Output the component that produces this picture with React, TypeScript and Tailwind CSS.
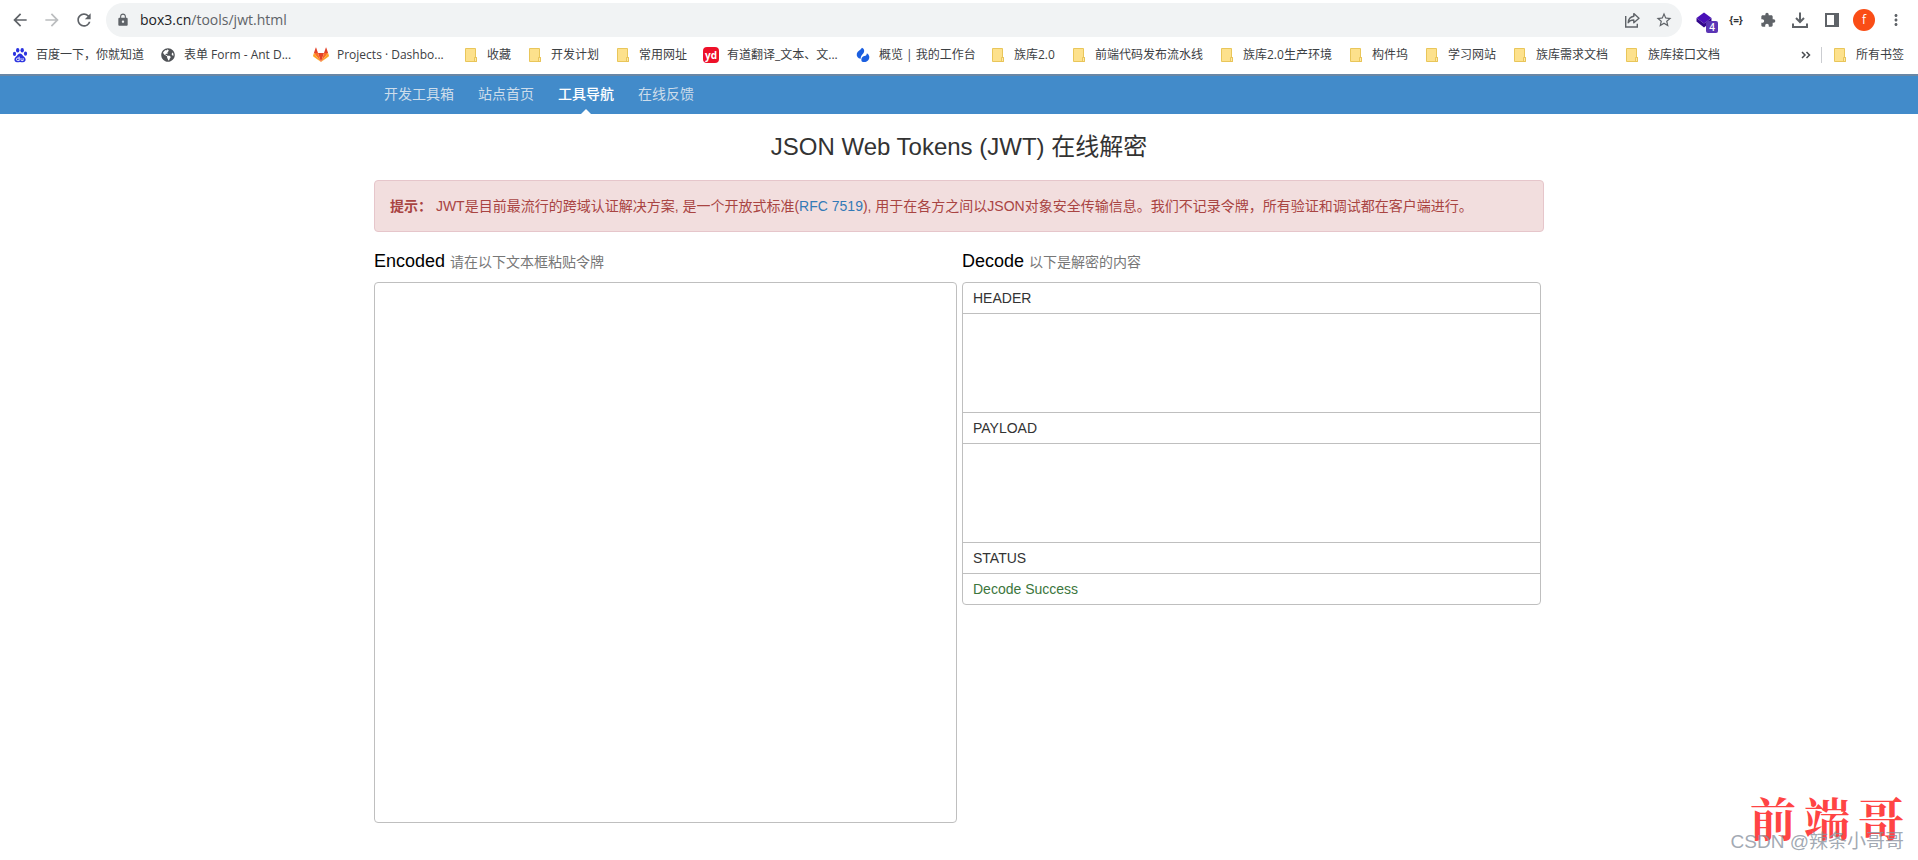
import type { ReactNode } from 'react';
import { FaGlobeAmericas } from 'react-icons/fa';
import {
  MdArrowBack,
  MdArrowForward,
  MdExtension,
  MdLock,
  MdMoreVert,
  MdRefresh,
  MdStarBorder,
} from 'react-icons/md';

function FolderIcon() {
  return (
    <svg viewBox="0 0 16 16" className="size-4 shrink-0" aria-hidden="true">
      <path d="M2.500 1.500h10v9h1v4h-11z" fill="#fde18c" stroke="#e9c65a" />
      <path d="M11.500 10.500h2v4h-2z" fill="#fdeaa6" stroke="#e6be4c" strokeWidth=".8" />
    </svg>
  );
}

function BaiduIcon() {
  return (
    <svg viewBox="0 0 16 16" className="size-4 shrink-0" aria-hidden="true">
      <g fill="#2a32e0">
        <ellipse cx="5.700" cy="3.200" rx="1.700" ry="2.300" />
        <ellipse cx="10.200" cy="3.200" rx="1.700" ry="2.300" />
        <ellipse cx="2.500" cy="6.900" rx="1.600" ry="2.100" />
        <ellipse cx="13.500" cy="6.700" rx="1.600" ry="2.100" />
        <path d="M8 6.600c1.500 0 2.200 1.300 3.200 2.400 1.100 1.100 2.400 1.800 2.400 3.500 0 1.800-1.200 2.700-2.600 2.700-1.100 0-2-.3-3-.3s-1.900.3-3 .3c-1.500 0-2.600-.9-2.600-2.700 0-1.700 1.300-2.400 2.400-3.500 1-1.100 1.700-2.400 3.200-2.400z" />
      </g>
      <path
        d="M7.200 9.600v4h-1.500a1.200 1.200 0 0 1 0-2.500h1.500M9 11.100v1.700q0 .8.800.8h1.300v-2.500"
        fill="none"
        stroke="#fff"
        strokeWidth=".9"
      />
    </svg>
  );
}

function GitlabIcon() {
  return (
    <svg viewBox="0 0 16 16" className="size-4 shrink-0" aria-hidden="true">
      <path d="M8 15 11 6H5z" fill="#e24329" />
      <path d="M8 15 5 6H.9z" fill="#fc6d26" />
      <path d="M8 15 11 6h4.100z" fill="#fc6d26" />
      <path d="M.9 6 .1 8.600c-.1.300 0 .6.200.8L8 15z" fill="#fca326" />
      <path d="m15.100 6 .8 2.600c.1.300 0 .6-.2.8L8 15z" fill="#fca326" />
      <path d="M.9 6H5L3.200.8c-.1-.3-.4-.3-.5 0zM15.100 6H11L12.800.8c.1-.3.4-.3.500 0z" fill="#e24329" />
    </svg>
  );
}

function YoudaoIcon() {
  return (
    <span className="flex size-4 shrink-0 items-center justify-center rounded-sm bg-[#ee1029] text-[10px] leading-none font-bold text-white">
      yd
    </span>
  );
}

function WorkbenchIcon() {
  return (
    <svg viewBox="0 0 16 16" className="size-4 shrink-0" aria-hidden="true">
      <path
        d="M7 .8c2.400 1 2.900 3.800 1.200 5.600C6.500 8.200 5.600 9.300 5.700 11.800 2.800 11.400 1.300 9.300 1.800 6.800 2.300 4.300 5.300 3.300 7 .8z"
        fill="#1b5fe0"
      />
      <path
        d="M6.800 14.500c-1.100-2.600.2-4.800 2.600-5.400 1.700-.5 2.300-1.200 2.500-2.900 2.500 1.400 3.200 4.300 1.700 6.500-1.500 2.200-4.400 3-6.800 1.800z"
        fill="#1b5fe0"
      />
    </svg>
  );
}

function ShareIcon() {
  return (
    <svg viewBox="0 0 18 18" className="size-[18px]" fill="none" stroke="#5f6368" strokeWidth="1.400" aria-hidden="true">
      <path d="M2.700 5v11h11.600v-3.200" />
      <path d="M10.800 2.600 16 7.200l-5.200 4.500V9c-2.700 0-4.500.8-5.600 2.700.2-3.700 2.200-6 5.600-6.500z" strokeLinejoin="round" />
    </svg>
  );
}

function StackIcon() {
  return (
    <svg viewBox="0 0 16 16" className="size-4" aria-hidden="true">
      <path d="M8 .5 15.500 6 8 11.500.5 6z" fill="#4a10b8" />
      <path d="M.5 6 8 11.500 15.500 6v3.500L8 15.500.5 9.500z" fill="#33078c" />
    </svg>
  );
}

function DownloadIcon() {
  return (
    <svg viewBox="0 0 18 18" className="size-[18px]" fill="none" stroke="#5f6368" strokeWidth="2" aria-hidden="true">
      <path d="M9 1.500v9M5 7l4 4 4-4M2 12.500v3.500h14v-3.500" />
    </svg>
  );
}

function SidePanelIcon() {
  return (
    <svg viewBox="0 0 16 16" className="size-4" aria-hidden="true">
      <path d="M2 2h12v12H2z" fill="none" stroke="#5f6368" strokeWidth="2" />
      <path d="M10 2h5v12h-5z" fill="#5f6368" />
    </svg>
  );
}

function ToolButton({ label, children }: { label: string; children: ReactNode }) {
  return (
    <button type="button" aria-label={label} className="flex size-8 shrink-0 items-center justify-center text-[#5f6368]">
      {children}
    </button>
  );
}

const bookmarks: { label: string; width: string; icon?: ReactNode }[] = [
  { label: '百度一下，你就知道', width: 'w-[108px]', icon: <BaiduIcon /> },
  {
    label: '表单 Form - Ant D...',
    width: 'w-[113px]',
    icon: <FaGlobeAmericas className="size-[14px] mx-px shrink-0 text-[#505357]" />,
  },
  { label: 'Projects · Dashbo...', width: 'w-[110px]', icon: <GitlabIcon /> },
  { label: '收藏', width: 'w-[24px]' },
  { label: '开发计划', width: 'w-[48px]' },
  { label: '常用网址', width: 'w-[48px]' },
  { label: '有道翻译_文本、文...', width: 'w-[112px]', icon: <YoudaoIcon /> },
  { label: '概览 | 我的工作台', width: 'w-[95px]', icon: <WorkbenchIcon /> },
  { label: '族库2.0', width: 'w-[41px]' },
  { label: '前端代码发布流水线', width: 'w-[108px]' },
  { label: '族库2.0生产环境', width: 'w-[89px]' },
  { label: '构件坞', width: 'w-[36px]' },
  { label: '学习网站', width: 'w-[48px]' },
  { label: '族库需求文档', width: 'w-[72px]' },
  { label: '族库接口文档', width: 'w-[72px]' },
];

function BrowserChrome() {
  return (
    <header className="border-b-2 border-[#6a87a5] bg-white font-['Open_Sans','Noto_Sans_CJK_SC',sans-serif]">
      <div className="flex h-10 items-center px-1 pr-[6px]">
        <ToolButton label="后退">
          <MdArrowBack className="size-5" />
        </ToolButton>
        <ToolButton label="前进">
          <MdArrowForward className="size-5 text-[#bbbdbf]" />
        </ToolButton>
        <ToolButton label="重新加载">
          <MdRefresh className="size-5" />
        </ToolButton>
        <div className="mx-[6px] flex h-[34px] min-w-0 flex-1 items-center rounded-full bg-[#f1f3f4] pr-[2px] pl-[10px]">
          <MdLock className="size-[14px] shrink-0 text-[#5f6368]" />
          <p className="ml-[10px] min-w-0 flex-1 truncate text-sm text-[#5f6368]">
            <span className="text-[#202124]">box3.cn</span>/tools/jwt.html
          </p>
          <ToolButton label="分享">
            <ShareIcon />
          </ToolButton>
          <ToolButton label="收藏此页">
            <MdStarBorder className="size-[18px]" />
          </ToolButton>
        </div>
        <ToolButton label="扩展">
          <span className="relative">
            <StackIcon />
            <span className="absolute top-[9px] left-[10px] flex size-3 items-center justify-center rounded-xs bg-[#5b35b5] text-[10px] leading-none font-semibold text-white">
              4
            </span>
          </span>
        </ToolButton>
        <ToolButton label="JSON">
          <span className="text-[10px] leading-none font-bold text-[#303134]">{'{=}'}</span>
        </ToolButton>
        <ToolButton label="扩展程序">
          <MdExtension className="size-4" />
        </ToolButton>
        <ToolButton label="下载">
          <DownloadIcon />
        </ToolButton>
        <ToolButton label="侧边栏">
          <SidePanelIcon />
        </ToolButton>
        <ToolButton label="个人资料">
          <span className="flex size-[22px] items-center justify-center rounded-full bg-[#fa4d16] text-xs leading-none text-white">
            f
          </span>
        </ToolButton>
        <ToolButton label="菜单">
          <MdMoreVert className="size-[18px]" />
        </ToolButton>
      </div>
      <nav className="flex h-[34px] items-center pr-[14px] pb-1 pl-3 text-xs text-[#3c4043]" aria-label="书签">
        <ul className="flex min-w-0 flex-1 gap-4 overflow-hidden">
          {bookmarks.map(({ label, width, icon }) => (
            <li key={label} className="shrink-0">
              <a href="#" className="flex items-center gap-2">
                {icon ?? <FolderIcon />}
                <span className={`whitespace-nowrap ${width}`}>{label}</span>
              </a>
            </li>
          ))}
        </ul>
        <button type="button" aria-label="更多书签" className="mr-[10px]">
          <svg viewBox="0 0 10 8" className="h-2 w-[10px]" fill="none" stroke="#4a4d51" strokeWidth="1.500" aria-hidden="true">
            <path d="m1 1 3 3-3 3M5.500 1l3 3-3 3" />
          </svg>
        </button>
        <span className="mr-[10px] h-4 w-px bg-[#cbcdd1]" />
        <a href="#" className="flex items-center gap-2">
          <FolderIcon />
          <span className="whitespace-nowrap">所有书签</span>
        </a>
      </nav>
    </header>
  );
}

const navItems = [
  { label: '开发工具箱', active: false },
  { label: '站点首页', active: false },
  { label: '工具导航', active: true },
  { label: '在线反馈', active: false },
];

function SiteNav() {
  return (
    <nav className="bg-[#428bca]" aria-label="站点">
      <ul className="mx-auto flex max-w-[1170px] gap-1 text-sm">
        {navItems.map(({ label, active }) => (
          <li key={label}>
            <a
              href="#"
              aria-current={active ? 'page' : undefined}
              className={
                active
                  ? 'relative block px-[10px] pt-2 pb-[10px] font-medium text-white'
                  : 'block px-[10px] pt-2 pb-[10px] text-[#cdddeb]'
              }
            >
              {label}
              {active && (
                <span className="absolute bottom-0 left-1/2 -ml-[5px] border-x-[5px] border-b-[5px] border-x-transparent border-b-white" />
              )}
            </a>
          </li>
        ))}
      </ul>
    </nav>
  );
}

const cell = 'border-t border-[#bfbfbf] px-[10px] py-[5px] text-left font-normal';

function DecodeTable() {
  return (
    <div className="rounded border border-[#bfbfbf]">
      <table className="w-full border-separate border-spacing-0 text-sm text-[#333]" aria-labelledby="decode-title">
        <tbody>
          <tr>
            <th scope="row" className="px-[10px] py-[5px] text-left font-normal">HEADER</th>
          </tr>
          <tr>
            <td className={`h-[99px] ${cell}`} />
          </tr>
          <tr>
            <th scope="row" className={cell}>PAYLOAD</th>
          </tr>
          <tr>
            <td className={`h-[99px] ${cell}`} />
          </tr>
          <tr>
            <th scope="row" className={cell}>STATUS</th>
          </tr>
          <tr>
            <td className={`text-[#3c763d] ${cell}`}>Decode Success</td>
          </tr>
        </tbody>
      </table>
    </div>
  );
}

export default function App() {
  return (
    <div className="relative min-h-screen bg-white font-['Liberation_Sans','Noto_Sans_CJK_SC',sans-serif] text-sm text-[#333]">
      <BrowserChrome />
      <SiteNav />
      <main className="mx-auto max-w-[1170px] pt-[17px] pb-9">
        <h1 className="text-center text-2xl">JSON Web Tokens (JWT) 在线解密</h1>
        <p className="mt-[17px] rounded border border-[#e6c6cb] bg-[#f2dede] p-[15px] text-[#a94442]">
          <strong className="font-bold">提示：</strong> JWT是目前最流行的跨域认证解决方案, 是一个开放式标准(
          <a href="#" className="text-[#337ab7]">RFC 7519</a>
          ), 用于在各方之间以JSON对象安全传输信息。我们不记录令牌，所有验证和调试都在客户端进行。
        </p>
        <div className="mt-[15px] grid grid-cols-2">
          <section className="pr-[2px]">
            <label htmlFor="encoded" className="block text-lg text-black">
              Encoded <small className="text-sm text-[#777]">请在以下文本框粘贴令牌</small>
            </label>
            <textarea
              id="encoded"
              className="mt-[7px] block h-[541px] w-full resize-none rounded border border-[#bfbfbf] px-3 py-[6px] outline-none"
            />
          </section>
          <section className="pr-[3px] pl-[3px]">
            <h2 id="decode-title" className="mb-[7px] text-lg text-black">
              Decode <small className="text-sm text-[#777]">以下是解密的内容</small>
            </h2>
            <DecodeTable />
          </section>
        </div>
      </main>
      <div className="pointer-events-none absolute right-[14px] bottom-1 h-16 w-[176px]">
        <p className="absolute top-0 right-0 flex gap-2 font-['Noto_Serif_CJK_SC','Noto_Sans_CJK_SC',serif] text-[46px] leading-[48px] font-bold text-[#f44]">
          <span>前</span>
          <span>端</span>
          <span>哥</span>
        </p>
        <p className="absolute right-0 bottom-0 text-[19px] leading-7 whitespace-nowrap text-[#8a93a0]/80">CSDN @辣条小哥哥</p>
      </div>
    </div>
  );
}
